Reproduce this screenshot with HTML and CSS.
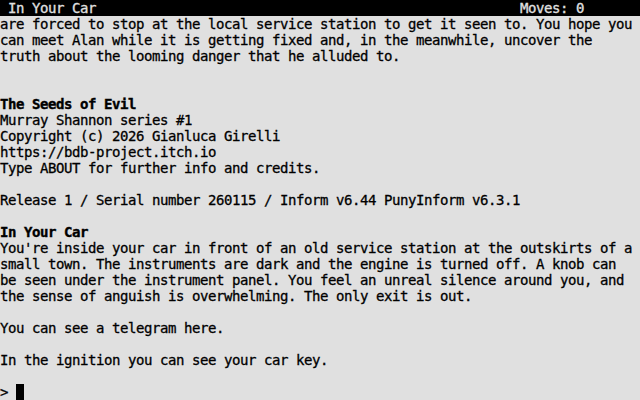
FILE: index.html
```html
<!DOCTYPE html>
<html>
<head>
<meta charset="utf-8">
<link rel="stylesheet" href="styles.css">
</head>
<body>
<div class="screen">
  <div class="status"><span class="loc">In Your Car</span><span class="moves">Moves: 0</span></div>
  <div class="main">
    <p class="text">are forced to stop at the local service station to get it seen to. You hope you
can meet Alan while it is getting fixed and, in the meanwhile, uncover the
truth about the looming danger that he alluded to.</p>
    <p class="text gap2"><b>The Seeds of Evil</b>
Murray Shannon series #1
Copyright (c) 2026 Gianluca Girelli
https://bdb-project.itch.io
Type ABOUT for further info and credits.</p>
    <p class="text gap1">Release 1 / Serial number 260115 / Inform v6.44 PunyInform v6.3.1</p>
    <p class="text gap1"><b>In Your Car</b>
You're inside your car in front of an old service station at the outskirts of a
small town. The instruments are dark and the engine is turned off. A knob can
be seen under the instrument panel. You feel an unreal silence around you, and
the sense of anguish is overwhelming. The only exit is out.</p>
    <p class="text gap1">You can see a telegram here.</p>
    <p class="text gap1">In the ignition you can see your car key.</p>
    <p class="text gap1 prompt">&gt; <span class="cursor"></span></p>
  </div>
</div>
</body>
</html>
```
FILE: styles.css
```css
html, body {
  margin: 0;
  padding: 0;
  background: #e0e0e0;
}
.screen {
  width: 640px;
  height: 400px;
  overflow: hidden;
  background: #e0e0e0;
  color: #000;
  font-family: "DejaVu Sans Mono", "Liberation Mono", monospace;
  font-size: 14px;
  letter-spacing: -0.43px;
  line-height: 16px;
  -webkit-text-stroke: 0.3px currentColor;
}
.status {
  display: grid;
  grid-template-columns: 520px 1fr;
  height: 16px;
  background: #000;
  color: #e0e0e0;
}
.loc {
  padding-left: 8px;
}
.text {
  margin: 0;
  white-space: pre;
}
.text b {
  -webkit-text-stroke: 0.4px currentColor;
}
.gap1 {
  margin-top: 16px;
}
.gap2 {
  margin-top: 32px;
}
.prompt {
  display: flex;
  align-items: stretch;
  height: 16px;
}
.cursor {
  display: inline-block;
  width: 8px;
  height: 16px;
  background: #000;
}
```
